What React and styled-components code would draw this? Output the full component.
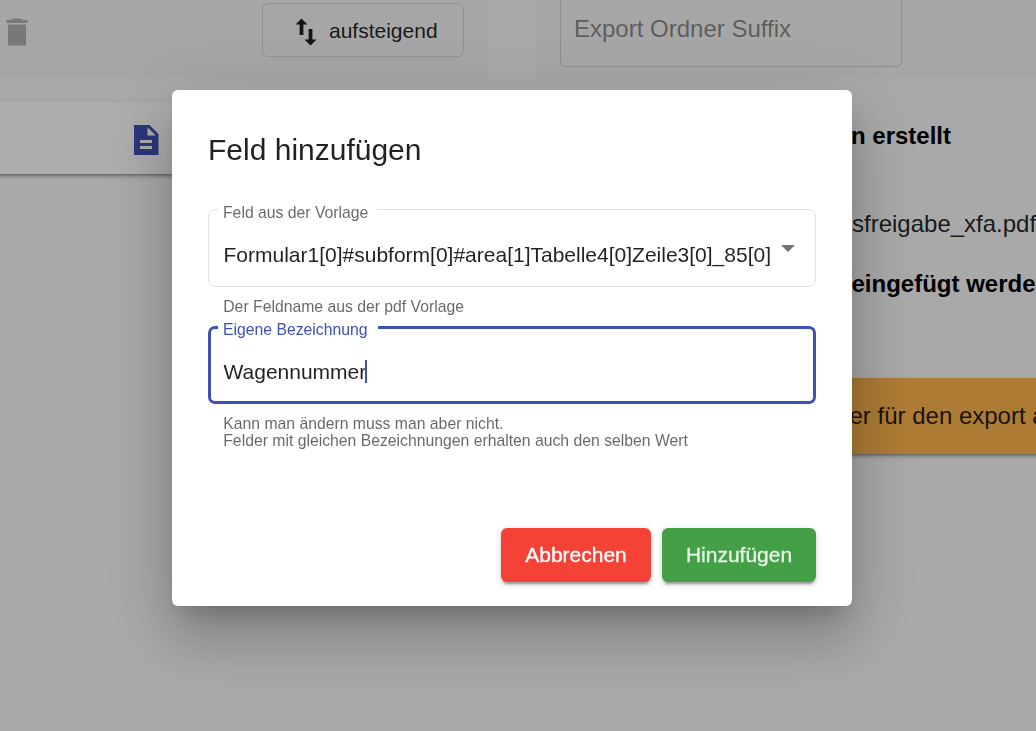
import React from 'react';
import styled, { createGlobalStyle } from 'styled-components';

const GlobalStyle = createGlobalStyle`
  * { box-sizing: border-box; }
  html, body { height: 100%; margin: 0; overflow: hidden; }
  body {
    background: #fafafa;
    color: rgba(0, 0, 0, 0.87);
    font-family: "Liberation Sans", Arial, sans-serif;
    font-size: 21px;
  }
`;

const elevation = `0 4.5px 1.5px -3px rgba(0, 0, 0, 0.2),
    0 3px 3px 0 rgba(0, 0, 0, 0.14),
    0 1.5px 7.5px 0 rgba(0, 0, 0, 0.12)`;

const Page = styled.div`
  display: flex;
  gap: 48px;
  width: 1036px;
  height: 731px;
  overflow: hidden;
`;

const TemplateColumn = styled.section`
  flex: 0 0 488px;
`;

const ExportColumn = styled.section`
  flex: 1;
  min-width: 0;
`;

const Toolbar = styled.div`
  display: flex;
  align-items: flex-start;
  justify-content: space-between;
  height: 78px;
  padding: ${(p) => p.$padding};
  background: #f5f5f5;
`;

const Icon = styled.svg`
  display: block;
  flex: none;
  width: 36px;
  height: 36px;
  fill: currentColor;
`;

const DeleteButton = styled.button`
  margin: 11px 0 0;
  padding: 0;
  border: 0;
  background: none;
  color: rgba(0, 0, 0, 0.28);
`;

const SortButton = styled.button`
  display: flex;
  align-items: center;
  gap: 5px;
  width: 202px;
  height: 54px;
  padding: 3px 0 0 25px;
  border: 1px solid rgba(0, 0, 0, 0.12);
  border-radius: 6px;
  background: none;
  color: rgba(0, 0, 0, 0.87);
  font: inherit;
`;

const SortLabel = styled.span`
  padding-bottom: 2px;
`;

const SuffixField = styled.div`
  width: 342px;
  height: 67px;
  padding: 14px 13px;
  border: 1px solid rgba(0, 0, 0, 0.15);
  border-top: 0;
  border-radius: 0 0 6px 6px;
  color: rgba(0, 0, 0, 0.46);
  font-size: 24px;
  line-height: 30px;
`;

const TemplateCard = styled.div`
  display: flex;
  align-items: center;
  height: 72px;
  margin: 24px 0 0 -24px;
  padding: 4px 0 0 152px;
  background: #fff;
  color: #3f51b5;
  box-shadow: ${elevation};
`;

const ExportDetails = styled.div`
  display: flex;
  flex-direction: column;
  padding: 43px 0 0 24px;
  font-size: 24px;
  line-height: 30px;
  white-space: nowrap;
`;

const Heading = styled.strong`
  margin-bottom: ${(p) => p.$after};
  padding-left: ${(p) => p.$indent};
  color: #000;
`;

const FileName = styled.span`
  margin-bottom: 30px;
  padding-left: 292px;
`;

const Warning = styled.div`
  height: 76px;
  margin-right: -24px;
  padding-left: 289.5px;
  background: #ffb74d;
  line-height: 76px;
  box-shadow: ${elevation};
`;

const Backdrop = styled.div`
  position: fixed;
  inset: 0;
  display: flex;
  align-items: flex-start;
  justify-content: center;
  padding: 90px 12px 0 0;
  background: rgba(0, 0, 0, 0.32);
`;

const Dialog = styled.div`
  display: flex;
  flex-direction: column;
  width: 680px;
  height: 516px;
  padding: 36px 36px 24px;
  border-radius: 6px;
  background: #fff;
  box-shadow:
    0 16.5px 22.5px -10.5px rgba(0, 0, 0, 0.2),
    0 36px 57px 4.5px rgba(0, 0, 0, 0.14),
    0 13.5px 69px 12px rgba(0, 0, 0, 0.12);
`;

const Title = styled.h1`
  margin: 0 0 35px;
  font-size: 30px;
  font-weight: 400;
  line-height: 48px;
`;

const Field = styled.div`
  position: relative;
  display: flex;
  align-items: flex-start;
  height: 78px;
  padding: ${(p) => (p.$focused ? '31px 12.5px 0' : '33px 14.5px 0')};
  border: ${(p) => (p.$focused ? '3px solid #3f51b5' : '1px solid rgba(0, 0, 0, 0.12)')};
  border-radius: 7px;
  line-height: 24px;
  white-space: nowrap;
`;

const Label = styled.label`
  position: absolute;
  top: ${(p) => (p.$focused ? '-8px' : '-6px')};
  left: ${(p) => (p.$focused ? '7px' : '9px')};
  width: ${(p) => (p.$focused ? '160px' : '159px')};
  padding-left: 5px;
  background: #fff;
  color: ${(p) => (p.$focused ? '#3f51b5' : 'rgba(0, 0, 0, 0.6)')};
  font-size: 15.75px;
  line-height: 18px;
`;

const Caret = styled.span`
  width: 2px;
  height: 23px;
  margin-left: -1.5px;
  background: #3f51b5;
`;

const SelectArrow = styled.span`
  margin: 2px 6px 0 auto;
  border: 7.5px solid transparent;
  border-top-color: #757575;
  border-bottom: 0;
`;

const Hint = styled.p`
  height: ${(p) => p.$height};
  margin: 0;
  padding: 11px 15.25px 0;
  color: rgba(0, 0, 0, 0.6);
  font-size: 15.75px;
  line-height: 17px;
`;

const Actions = styled.div`
  display: flex;
  justify-content: flex-end;
  gap: 11px;
  margin-top: auto;
`;

const ActionButton = styled.button`
  width: ${(p) => p.$width};
  height: 54px;
  padding: 0;
  border: 0;
  border-radius: 6px;
  background: ${(p) => p.$background};
  color: ${(p) => p.$color};
  font: inherit;
  -webkit-text-stroke: 0.3px currentColor;
  box-shadow: ${elevation};
`;

export default function App() {
  return (
    <>
      <GlobalStyle />
      <Page>
        <TemplateColumn>
          <Toolbar $padding="3px 24px 0 0">
            <DeleteButton aria-label="Löschen">
              <Icon viewBox="0.67 0 24 24">
                <path d="M6 21h12V7H6v14zM19 4h-3.5l-1-1h-5l-1 1H5v2h14V4z" />
              </Icon>
            </DeleteButton>
            <SortButton>
              <Icon viewBox="0 0 24 24">
                <path d="M9 3L5 6.99h2.75V14h2.5V6.99H13L9 3zm7.25 14.01V10h-2.5v7.01H11L15 21l4-3.99h-2.75z" />
              </Icon>
              <SortLabel>aufsteigend</SortLabel>
            </SortButton>
          </Toolbar>
          <TemplateCard>
            <Icon viewBox="0 0 24 24">
              <path d="M14 2H4v20h16.3V8l-6-6zm2 16H8v-2h8v2zm0-4H8v-2h8v2zm-3-5V3.5L18.5 9H13z" />
            </Icon>
          </TemplateCard>
        </TemplateColumn>
        <ExportColumn>
          <Toolbar $padding="0 0 0 24px">
            <SuffixField>Export Ordner Suffix</SuffixField>
          </Toolbar>
          <ExportDetails>
            <Heading $indent="291px" $after="58px">n erstellt</Heading>
            <FileName>sfreigabe_xfa.pdf</FileName>
            <Heading $indent="291.5px" $after="79px">eingefügt werde</Heading>
            <Warning>er für den export a</Warning>
          </ExportDetails>
        </ExportColumn>
      </Page>
      <Backdrop>
        <Dialog role="dialog" aria-modal="true">
          <Title>Feld hinzufügen</Title>
          <Field>
            <Label>Feld aus der Vorlage</Label>
            Formular1[0]#subform[0]#area[1]Tabelle4[0]Zeile3[0]_85[0]
            <SelectArrow />
          </Field>
          <Hint $height="39px">Der Feldname aus der pdf Vorlage</Hint>
          <Field $focused>
            <Label $focused>Eigene Bezeichnung</Label>
            Wagennummer
            <Caret />
          </Field>
          <Hint $height="60px">
            Kann man ändern muss man aber nicht.
            <br />
            Felder mit gleichen Bezeichnungen erhalten auch den selben Wert
          </Hint>
          <Actions>
            <ActionButton $width="150px" $background="#f44336" $color="#fff">
              Abbrechen
            </ActionButton>
            <ActionButton $width="154px" $background="#43a047" $color="rgba(255, 255, 255, 0.87)">
              Hinzufügen
            </ActionButton>
          </Actions>
        </Dialog>
      </Backdrop>
    </>
  );
}
